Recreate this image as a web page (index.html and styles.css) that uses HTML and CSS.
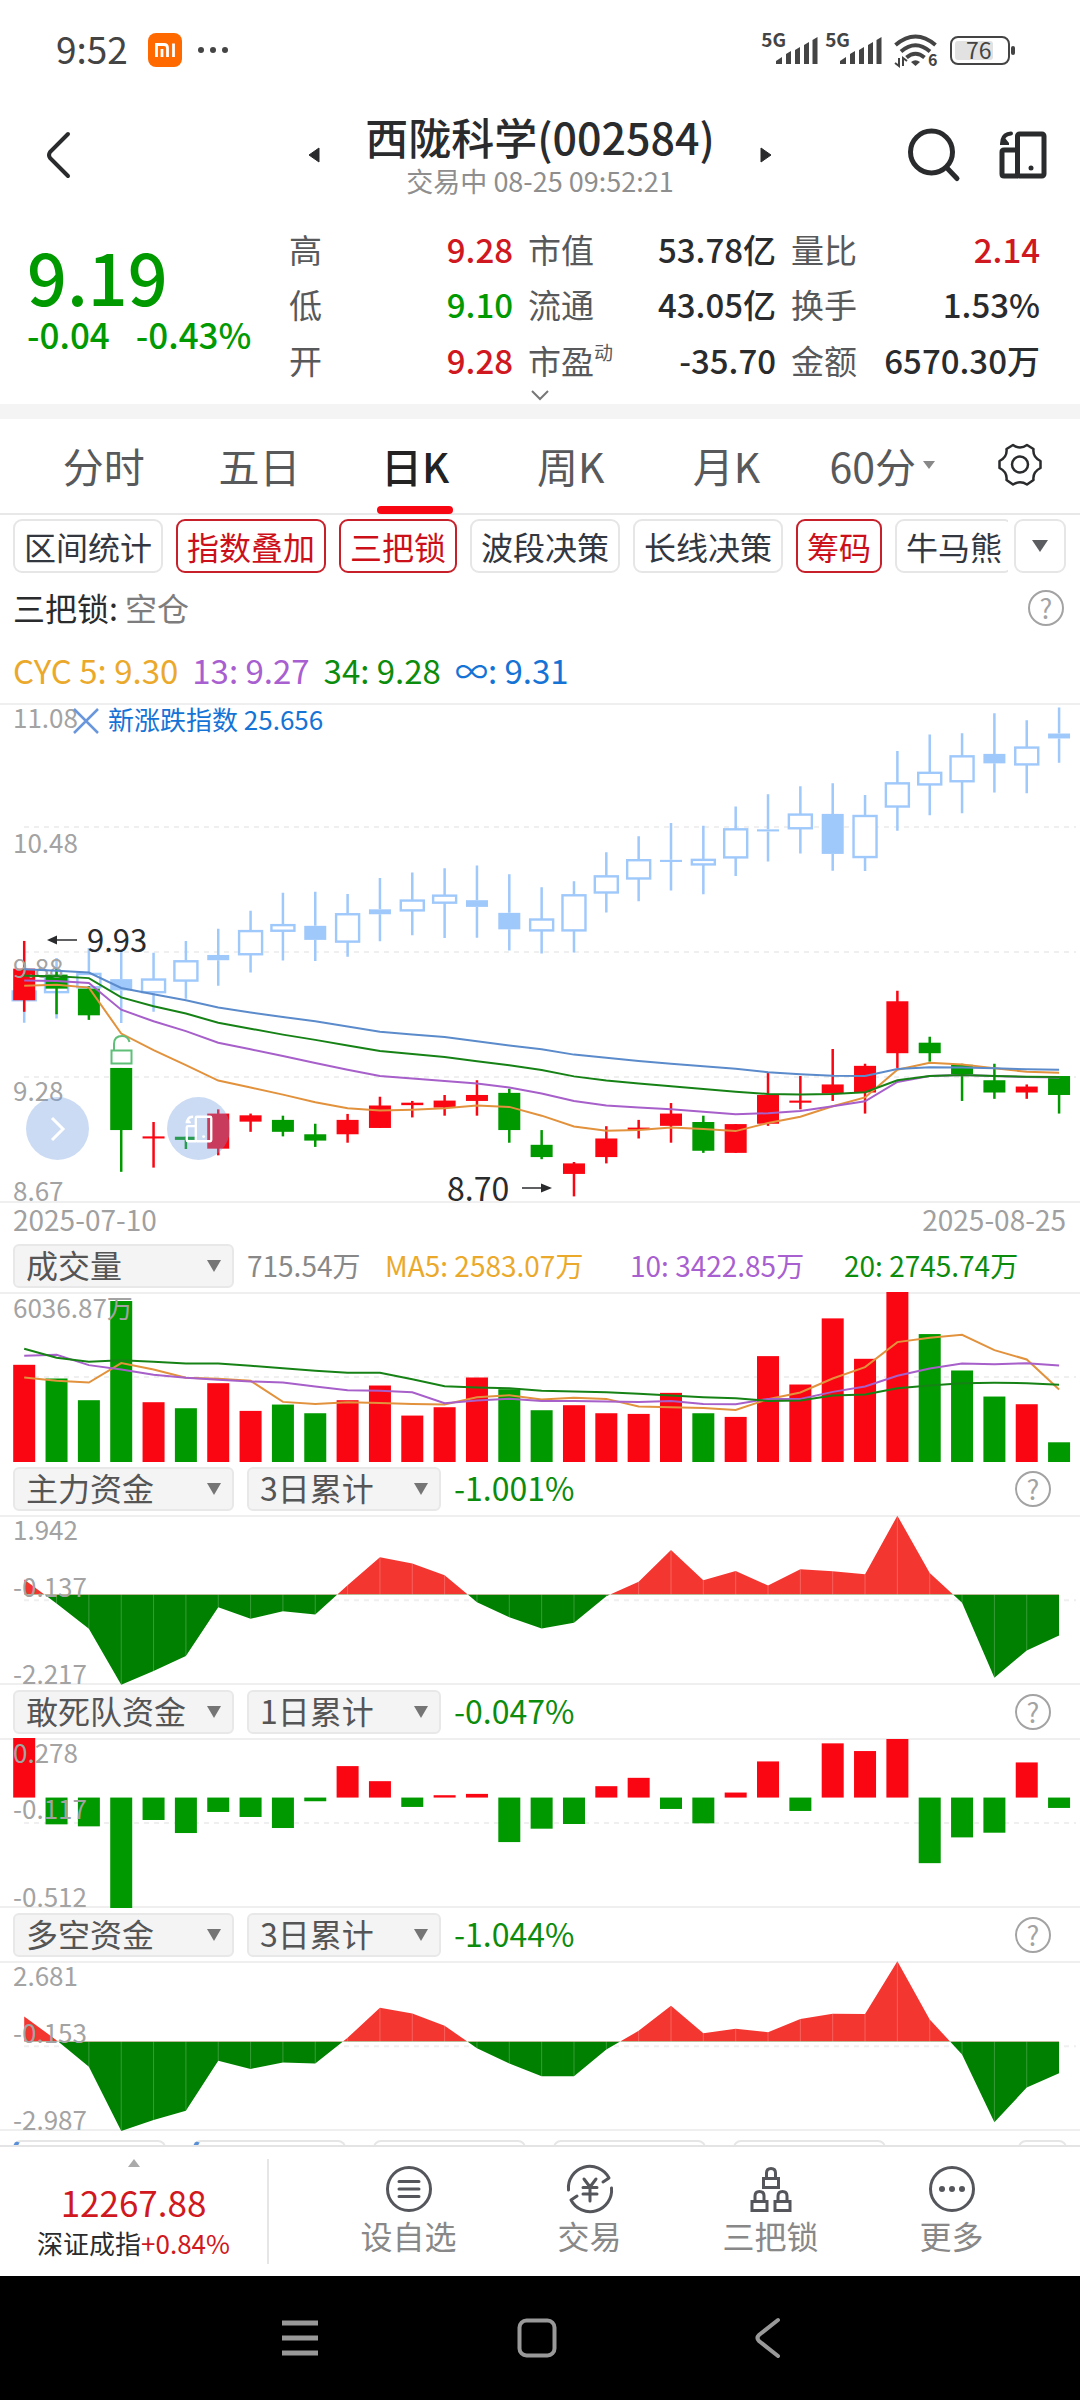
FILE: index.html
```html
<!DOCTYPE html>
<html lang="zh-CN">
<head>
<meta charset="utf-8">
<meta name="viewport" content="width=device-width, initial-scale=1">
<title>西陇科学(002584)</title>
<link rel="stylesheet" href="styles.css">
</head>
<body>
<div class="app">
  <div class="status">
    <span class="clock">9:52</span>
    <svg class="mi" viewBox="0 0 34 34" width="34" height="34"><rect width="34" height="34" rx="8" fill="#ff6900"/><path d="M8.500 24V11.500h7.500q3.500 0 3.500 3.500v9M14 16v8M25.500 10.500V24" fill="none" stroke="#fff" stroke-width="2.800"/></svg>
    <svg viewBox="0 0 32 8" width="32" height="8" fill="#444"><circle cx="4" cy="4" r="3"/><circle cx="16" cy="4" r="3"/><circle cx="28" cy="4" r="3"/></svg>
    <span class="spacer"></span>
    <span class="signal"><b>5G</b><svg viewBox="0 0 42 27" width="42" height="27" fill="#444"><path d="M0 27v-3l6-4v7zM10 27V17l5-3v13zM19 27V13l5-3v17zM28 27V8l5-3v22zM36.500 27V3l5-3v27z"/></svg></span>
    <span class="signal"><b>5G</b><svg viewBox="0 0 42 27" width="42" height="27" fill="#444"><path d="M0 27v-3l6-4v7zM10 27V17l5-3v13zM19 27V13l5-3v17zM28 27V8l5-3v22zM36.500 27V3l5-3v27z"/></svg></span>
    <svg class="wifi" viewBox="0 0 44 33" width="44" height="33" fill="none" stroke="#444" stroke-width="4"><path d="M1.500 11Q21.500-6 41.500 11M7 17.500q14.500-12.500 29 0M12.500 23.500q9-7.500 18 0"/><path d="M17 28q4.500-3.500 9 0l-4.500 4z" fill="#444" stroke="none"/><path d="M5 24v8l-4-3M9 32v-8l4 3" stroke-width="2"/><text x="34" y="32" font-size="16" font-weight="700" fill="#444" stroke="none">6</text></svg>
    <span class="battery"><span>76</span></span>
  </div>

  <header class="head">
    <button class="icon-btn back" aria-label="返回"><svg viewBox="0 0 26 46" width="26" height="46"><path d="M23 2 5 20q-2 3 0 6l18 18" fill="none" stroke="#2a2b2d" stroke-width="4" stroke-linecap="round"/></svg></button>
    <div class="title-group">
      <button class="icon-btn" aria-label="上一只"><svg viewBox="0 0 12 16" width="12" height="16"><path d="M11 1v14L1 8z" fill="#2a2b2d" stroke="#2a2b2d" stroke-linejoin="round"/></svg></button>
      <div class="title"><h1>西陇科学(002584)</h1><p>交易中 08-25 09:52:21</p></div>
      <button class="icon-btn" aria-label="下一只"><svg viewBox="0 0 12 16" width="12" height="16"><path d="M1 1v14l10-7z" fill="#2a2b2d" stroke="#2a2b2d" stroke-linejoin="round"/></svg></button>
    </div>
    <div class="head-tools">
      <button class="icon-btn" aria-label="搜索"><svg viewBox="0 0 54 54" width="54" height="54" fill="none" stroke="#2a2b2d" stroke-width="5"><circle cx="24.500" cy="24" r="21"/><path d="m40 40 10 10.500" stroke-linecap="round"/></svg></button>
      <button class="icon-btn" aria-label="横屏"><svg viewBox="0 0 48 48" width="48" height="48" fill="none" stroke="#2a2b2d" stroke-width="5"><rect x="18.500" y="3" width="26.500" height="42" rx="2"/><path d="M18.500 19H5q-2 0-2 2v22q0 2 2 2h14"/><circle cx="32" cy="37" r="2.500" fill="#2a2b2d" stroke="none"/><path d="M12 2.500Q5 3 3.500 9" stroke-linecap="round" stroke-width="4"/><path d="M1 13q0-6 5-6l4 5v2H1z" fill="#2a2b2d" stroke="none"/></svg></button>
    </div>
  </header>

  <main class="content">
    <section class="quote">
      <div class="price down"><strong>9.19</strong><span>-0.04</span><span>-0.43%</span></div>
      <dl class="stats">
        <div><dt>高</dt><dd class="up">9.28</dd></div>
        <div><dt>市值</dt><dd>53.78亿</dd></div>
        <div><dt>量比</dt><dd class="up">2.14</dd></div>
        <div><dt>低</dt><dd class="down">9.10</dd></div>
        <div><dt>流通</dt><dd>43.05亿</dd></div>
        <div><dt>换手</dt><dd>1.53%</dd></div>
        <div><dt>开</dt><dd class="up">9.28</dd></div>
        <div><dt>市盈<sup>动</sup></dt><dd>-35.70</dd></div>
        <div><dt>金额</dt><dd>6570.30万</dd></div>
      </dl>
      <button class="icon-btn more" aria-label="展开"><svg viewBox="0 0 18 10" width="18" height="10"><path d="m1 1 8 8 8-8" fill="none" stroke="#777" stroke-width="2"/></svg></button>
    </section>

    <nav class="tabs">
      <button>分时</button><button>五日</button><button class="active">日K</button><button>周K</button><button>月K</button><button>60分<i class="tri small"></i></button>
      <button class="gear" aria-label="设置"><svg viewBox="0 0 44 44" width="44" height="44" fill="none" stroke="#2a2b2d" stroke-width="2.500" stroke-linejoin="round"><path d="M15 2Q22 7 29 2L35.500 6Q34.500 14 42.500 18V25Q34.500 29 35.500 37L29 41.500Q22 37 15 41.500L8.500 37Q9.500 29 1.500 25V18Q9.500 14 8.500 6Z"/><circle cx="22" cy="21.500" r="8"/></svg></button>
    </nav>

    <div class="chips">
      <div class="chip-list">
        <button>区间统计</button><button class="on">指数叠加</button><button class="on">三把锁</button><button>波段决策</button><button>长线决策</button><button class="on">筹码</button><button>牛马熊</button>
      </div>
      <button class="chip-more" aria-label="更多指标"><i class="tri"></i></button>
    </div>

    <div class="lock-row">
      <p>三把锁: <span>空仓</span></p>
      <button class="help" aria-label="说明">?</button>
    </div>
    <p class="cyc"><span class="c-orange">CYC 5: 9.30</span><span class="c-purple">13: 9.27</span><span class="c-green">34: 9.28</span><span class="c-blue">∞: 9.31</span></p>

    <section class="kline">
      <svg id="kline" class="chart" viewBox="0 0 1080 500"></svg>
      <button class="float expand" aria-label="展开侧栏"><svg viewBox="0 0 16 26" width="16" height="26"><path d="m2 2 11 11L2 24" fill="none" stroke="#fff" stroke-width="3"/></svg></button>
      <button class="float rotate" aria-label="横屏"><svg viewBox="0 0 48 48" width="28" height="28" fill="none" stroke="#fff" stroke-width="4"><rect x="18.500" y="3" width="26.500" height="42" rx="2"/><path d="M18.500 19H5q-2 0-2 2v22q0 2 2 2h14"/><circle cx="32" cy="37" r="2.500" fill="#fff" stroke="none"/><path d="M14 3Q6 3 4.500 9"/><path d="M1 13q0-6 5-6l4 5v2H1z" fill="#fff" stroke="none"/></svg></button>
    </section>
    <div class="dates"><time>2025-07-10</time><time>2025-08-25</time></div>

    <section>
      <div class="panel-head">
        <label class="pick wide"><select aria-label="指标一"><option>成交量</option></select><i class="tri"></i></label>
        <p class="ma"><span class="c-gray">715.54万</span><span class="c-orange">MA5: 2583.07万</span><span class="c-purple">10: 3422.85万</span><span class="c-green">20: 2745.74万</span></p>
      </div>
      <svg id="volume" class="chart" viewBox="0 0 1080 170"></svg>
    </section>

    <section>
      <div class="panel-head">
        <label class="pick wide"><select aria-label="指标二"><option>主力资金</option></select><i class="tri"></i></label>
        <label class="pick"><select aria-label="指标二周期"><option>3日累计</option></select><i class="tri"></i></label>
        <span class="sum">-1.001%</span>
        <button class="help" aria-label="说明">?</button>
      </div>
      <svg id="main-fund" class="chart" viewBox="0 0 1080 170"></svg>
    </section>

    <section>
      <div class="panel-head">
        <label class="pick wide"><select aria-label="指标三"><option>敢死队资金</option></select><i class="tri"></i></label>
        <label class="pick"><select aria-label="指标三周期"><option>1日累计</option></select><i class="tri"></i></label>
        <span class="sum">-0.047%</span>
        <button class="help" aria-label="说明">?</button>
      </div>
      <svg id="hot-fund" class="chart" viewBox="0 0 1080 170"></svg>
    </section>

    <section>
      <div class="panel-head">
        <label class="pick wide"><select aria-label="指标四"><option>多空资金</option></select><i class="tri"></i></label>
        <label class="pick"><select aria-label="指标四周期"><option>3日累计</option></select><i class="tri"></i></label>
        <span class="sum">-1.044%</span>
        <button class="help" aria-label="说明">?</button>
      </div>
      <svg id="bull-bear" class="chart" viewBox="0 0 1080 170"></svg>
    </section>

    <div class="cards"><i class="mark"></i><i class="mark"></i><i></i><i></i><i></i><i class="last"></i></div>
  </main>

  <footer class="bottom">
    <a class="index" href="#index"><i class="tri up-tri"></i><strong>12267.88</strong><span>深证成指<em>+0.84%</em></span></a>
    <nav class="actions">
      <a href="#fav"><svg viewBox="0 0 48 48" width="48" height="48" fill="none" stroke="#54565c" stroke-width="3"><circle cx="24" cy="24" r="21.500"/><path d="M14 16.500h20M14 24h20M14 31.500h20" stroke-linecap="round"/></svg>设自选</a>
      <a href="#trade"><svg viewBox="0 0 48 48" width="48" height="48" fill="none" stroke="#54565c" stroke-width="3" stroke-linecap="round" stroke-linejoin="round"><path d="M2.500 25A21.500 21.500 0 0 1 43 13L37 17M45.500 23A21.500 21.500 0 0 1 5 35L11 31M18 14l6 8 6-8M24 22v14M17 22.500h14M17 29h14"/></svg>交易</a>
      <a href="#locks"><svg viewBox="0 0 48 48" width="48" height="48" fill="none" stroke="#54565c" stroke-width="3"><path d="M16.500 13.500h15v9h-15zM19.500 13V8q0-4.500 4.500-4.500T28.500 8v5M5 36.500h15v9H5zM8 36v-5q0-4.500 4.500-4.500T17 31v5M28 36.500h15v9H28zM31 36v-5q0-4.500 4.500-4.500T40 31v5"/></svg>三把锁</a>
      <a href="#more"><svg viewBox="0 0 48 48" width="48" height="48" fill="none" stroke="#54565c" stroke-width="3"><circle cx="24" cy="24" r="21.500"/><g fill="#54565c" stroke="none"><circle cx="14" cy="24" r="3"/><circle cx="24" cy="24" r="3"/><circle cx="34" cy="24" r="3"/></g></svg>更多</a>
    </nav>
  </footer>

  <div class="sysnav">
    <button class="icon-btn" aria-label="最近任务"><svg viewBox="0 0 38 38" width="38" height="38" stroke="#999" stroke-width="5"><path d="M1 4h36M1 19h36M1 34h36"/></svg></button>
    <button class="icon-btn" aria-label="主屏幕"><svg viewBox="0 0 40 40" width="40" height="40"><rect x="2.500" y="2.500" width="35" height="35" rx="7" fill="none" stroke="#999" stroke-width="4"/></svg></button>
    <button class="icon-btn" aria-label="返回"><svg viewBox="0 0 26 40" width="26" height="40"><path d="M23 2 4 17q-3 3 0 6l19 15" fill="none" stroke="#999" stroke-width="4" stroke-linecap="round"/></svg></button>
  </div>
</div>
<script src="charts.js"></script>
</body>
</html>
```
FILE: styles.css
```css
* { box-sizing: border-box; }
body { margin: 0; background: #fff; color: #2a2b2d; font-family: "Noto Sans CJK SC", "Noto Sans", sans-serif; }
h1, p, dl, dd { margin: 0; }
button { border: 0; padding: 0; background: none; color: inherit; font: inherit; cursor: pointer; }
a { color: inherit; text-decoration: none; }
svg { display: block; flex: none; overflow: visible; }
i, em { font-style: normal; }
.up { color: #d01820; }
.down { color: #090; }
.c-orange { color: #eba92b; }
.c-purple { color: #a85fd0; }
.c-green { color: #0c8c0c; }
.c-blue { color: #1673d6; }
.c-gray { color: #888; }

.app { display: flex; flex-direction: column; height: 100vh; }
.icon-btn { display: flex; align-items: center; justify-content: center; }
.spacer { flex: 1; }

.status { display: flex; align-items: center; height: 100px; padding: 0 70px 0 56px; flex: none; color: #444; }
.clock { font-size: 37px; line-height: 54px; padding-bottom: 4px; }
.mi { margin: 0 15px 0 20px; }
.signal { display: flex; align-items: flex-end; height: 28px; margin-right: 7px; }
.signal b { font-size: 19px; line-height: 20px; align-self: flex-start; margin: -7px -10px 0 0; }
.wifi { margin: 0 12px 0 5px; }
.battery { position: relative; width: 60px; height: 29px; padding: 3px; border: 2px solid #444; border-radius: 8px; }
.battery::after { content: ""; position: absolute; right: -7px; top: 8px; width: 4px; height: 9px; border-radius: 2px; background: #444; }
.battery span { display: block; width: 38px; height: 19px; padding-left: 11px; border-radius: 3px; background: #e2e2e2; font-size: 23px; line-height: 17px; }

.head { display: grid; grid-template-columns: 1fr auto 1fr; align-items: center; height: 110px; padding: 0 33px; flex: none; }
.back { justify-self: start; margin-left: 12px; }
.title-group { display: flex; align-items: center; gap: 45px; }
.title { text-align: center; }
.title h1 { font-size: 43px; line-height: 52px; font-weight: 500; }
.title p { font-size: 27px; line-height: 38px; color: #8e8e8e; }
.head-tools { display: flex; justify-self: end; gap: 38px; }

.content { flex: 1; min-height: 0; overflow: hidden auto; scrollbar-width: none; }
.quote { display: grid; grid-template-columns: 262px 1fr; padding: 14px 40px 0 27px; height: 194px; }
.price { padding-top: 16px; }
.price strong { display: block; font-size: 70px; line-height: 72px; font-weight: 500; }
.price span { font-size: 35px; line-height: 44px; font-weight: 500; margin-right: 26px; }
.price span:last-child { margin-right: 0; }
.stats { display: grid; grid-template-columns: 224fr 248fr 249fr; gap: 0 15px; }
.stats div { display: flex; justify-content: space-between; height: 54px; font-size: 33px; line-height: 50px; }
.stats dt { color: #58595b; }
.stats dd { font-weight: 500; }
.stats sup { font-size: 19px; line-height: 0; vertical-align: 14px; }
.more { grid-column: 1 / -1; justify-self: center; height: 10px; margin-left: 13px; }

.tabs { display: flex; height: 111px; padding-left: 26px; border-top: 15px solid #f4f4f4; border-bottom: 2px solid #e8e8e8; }
.tabs button { flex: 1; display: flex; align-items: center; justify-content: center; padding-bottom: 3px; font-size: 41px; color: #58595b; }
.tabs .active { position: relative; color: #222; font-weight: 500; }
.tabs .active::after { content: ""; position: absolute; left: 50%; bottom: -1px; width: 76px; height: 8px; margin-left: -38px; border-radius: 4px; background: #f80713; }
.tabs .gear { flex: none; width: 120px; }
.tri { flex: none; border: solid transparent; border-width: 12px 8px 0; border-top-color: #5b5d60; }
.tri.small { border-width: 8px 6px 0; margin-left: 7px; border-top-color: #888; }

.chips { display: flex; gap: 6px; padding: 4px 14px 0 13px; }
.chip-list { display: flex; gap: 13px; flex: 1; min-width: 0; overflow: hidden; }
.chips button { flex: none; height: 54px; padding: 0 9px; border: 2px solid #e6e6e6; border-radius: 9px; font-size: 32px; line-height: 46px; color: #33373f; white-space: nowrap; }
.chips .on { border-color: #c8202a; color: #cc101a; }
.chips .chip-more { display: flex; align-items: center; justify-content: center; width: 52px; }

.lock-row { display: flex; align-items: center; justify-content: space-between; height: 70px; padding: 0 16px 0 13px; font-size: 32px; }
.lock-row p { padding-bottom: 2px; }
.lock-row span { color: #7d7d7d; }
.help { width: 36px; height: 36px; border: 2px solid #a3a3a3; border-radius: 50%; color: #a3a3a3; font-size: 27px; line-height: 30px; }
.cyc { display: flex; gap: 14px; height: 60px; padding-left: 13px; font-size: 33px; line-height: 54px; }

.chart { width: 100%; height: auto; }
.kline { position: relative; }
.float { position: absolute; top: 394px; display: flex; align-items: center; justify-content: center; width: 63px; height: 63px; border-radius: 50%; background: rgba(110, 155, 225, .36); }
.expand { left: 26px; }
.rotate { left: 167px; }
.dates { display: flex; justify-content: space-between; height: 36px; padding: 0 14px 0 13px; font-size: 28px; line-height: 32px; color: #a0a0a0; }

.panel-head { display: flex; align-items: center; gap: 13px; height: 53px; padding: 0 29px 0 13px; }
.pick { display: flex; align-items: center; position: relative; width: 194px; height: 44px; border: 2px solid #e8e8e8; border-radius: 6px; background: #f4f4f4; }
.pick.wide { width: 221px; }
.pick select { width: 100%; height: 40px; padding: 0 0 3px 11px; border: 0; background: none; appearance: none; font: 32px/36px "Noto Sans CJK SC", sans-serif; color: #555; }
.pick .tri { position: absolute; right: 11px; border-width: 12px 7px 0; border-top-color: #757575; }
.ma { display: grid; grid-template-columns: 138px 245px 214px auto; font-size: 28px; line-height: 38px; padding-bottom: 2px; white-space: nowrap; }
.sum { flex: 1; font-size: 32px; line-height: 46px; color: #0c8c0c; padding-bottom: 4px; }

.cards { display: flex; gap: 27px; padding: 9px 13px 0; }
.cards i { width: 153px; height: 54px; border: 2px solid #e6e6e6; border-radius: 8px; }
.cards .mark { border-left: 5px solid #5b8fd6; }
.cards .last { width: 49px; margin-left: auto; }

.bottom { display: flex; align-items: center; flex: none; height: 131px; border-top: 2px solid #e4e4e4; background: #fff; }
.index { display: flex; flex-direction: column; align-items: center; width: 269px; height: 105px; border-right: 2px solid #e6e6e6; }
.up-tri { border-width: 0 6px 8px; border-bottom-color: #aaa; }
.index strong { margin-top: 13px; font-size: 35px; line-height: 44px; font-weight: 400; color: #d01820; }
.index span { font-size: 26px; line-height: 38px; }
.index em { color: #d01820; }
.actions { flex: 1; display: flex; padding: 0 38px 0 49px; }
.actions a { flex: 1; display: flex; flex-direction: column; align-items: center; padding-bottom: 2px; font-size: 32px; line-height: 44px; color: #888; }
.sysnav { display: flex; align-items: center; justify-content: center; gap: 198px; flex: none; height: 124px; padding-right: 18px; background: #000; }

.grid { stroke: #efefef; stroke-width: 2; }
.dash { stroke-dasharray: 5 5; }
.axis { font-size: 26px; fill: #a3a3a3; }
.line { fill: none; stroke-width: 2; }
```
FILE: charts.js
```javascript
const NS = 'http://www.w3.org/2000/svg';
const RED = '#fa0612', GREEN = '#090', SKY = '#9fc8fb';
const BAR = 22;
const x = i => 24.2 + i * 32.34;
const scale = (min, max, h) => v => (v - min) / (max - min) * h;

function add(svg, tag, attrs, text) {
  const el = document.createElementNS(NS, tag);
  for (const k in attrs) el.setAttribute(k, attrs[k]);
  if (text) el.textContent = text;
  svg.appendChild(el);
  return el;
}
function hline(svg, y, dashed) {
  add(svg, 'path', { class: dashed ? 'grid dash' : 'grid', d: dashed ? `M24 ${y}H1076` : `M0 ${y}H1080` });
}
function line(svg, values, y, color) {
  add(svg, 'polyline', { class: 'line', stroke: color, points: values.map((v, i) => x(i) + ',' + y(v)).join(' ') });
}
function label(svg, text, y) { add(svg, 'text', { class: 'axis', x: 13, y }, text); }
function rect(svg, i, y1, y2, color) {
  add(svg, 'rect', { x: x(i) - BAR / 2, y: y1, width: BAR, height: Math.max(y2 - y1, 2), fill: color });
}

/* ---- price candles with the overlaid index ---- */
(function () {
  const svg = document.getElementById('kline'), y = scale(38, 1460, 499);
  hline(svg, 1); [124, 249, 374].forEach(v => hline(svg, v, true)); hline(svg, 499);
  const index = [
    ['h',795,860,885,949],['h',765,820,862,937],['h',736,810,848,860],['s',747,825,857,950],['h',750,826,862,918],
    ['h',716,774,829,881],['s',681,756,771,844],['h',630,688,754,806],['h',579,671,687,772],['s',576,673,713,773],
    ['h',582,640,718,761],['s',537,626,640,717],['h',521,601,629,700],['h',509,587,607,708],['s',501,600,619,707],
    ['s',526,636,683,743],['h',563,655,686,752],['h',546,586,686,749],['h',463,532,578,635],['h',418,486,538,603],
    ['s',380,485,491,572],['h',388,485,498,583],['h',333,398,478,531],['s',298,398,404,490],['h',275,356,395,467],
    ['s',267,354,468,516],['h',300,360,477,517],['h',175,267,333,402],['h',128,237,270,358],['h',124,190,261,352],
    ['s',67,183,210,293],['h',87,165,213,295],['s',51,125,139,208]];
  index.forEach(([kind, hi, top, bot, lo], i) => {
    add(svg, 'path', { d: `M${x(i)} ${y(hi)}V${y(top)}M${x(i)} ${y(bot)}V${y(lo)}`, stroke: SKY, 'stroke-width': 2.5 });
    if (kind === 's') rect(svg, i, y(top), y(bot), SKY);
    else add(svg, 'rect', { x: x(i) - 11.5, y: y(top), width: 23, height: y(bot) - y(top), fill: '#fff', stroke: SKY, 'stroke-width': 2.4 });
  });
  const price = [
    ['r',716,795,885,918],['g',795,812,852,925],['g',845,852,928,941],['g',1078,1078,1255,1374],['r',1232,1273,1279,1362],
    ['g',1274,1274,1283,1309],['r',1196,1208,1308,1327],['r',1208,1213,1231,1260],['g',1214,1226,1260,1273],['g',1237,1267,1285,1303],
    ['r',1209,1226,1267,1291],['r',1160,1185,1249,1249],['r',1172,1177,1184,1219],['r',1155,1171,1191,1214],['r',1113,1155,1172,1214],
    ['g',1137,1149,1255,1291],['g',1255,1297,1332,1338],['r',1346,1350,1380,1444],['r',1244,1279,1332,1350],['r',1226,1248,1255,1279],
    ['r',1178,1208,1243,1291],['g',1214,1232,1314,1320],['r',1238,1238,1320,1320],['r',1092,1155,1237,1243],['r',1101,1171,1177,1196],
    ['r',1024,1125,1151,1172],['r',1066,1072,1148,1208],['r',858,888,1036,1078],['g',989,1006,1036,1060],['g',1066,1069,1096,1172],
    ['g',1066,1113,1148,1166],['r',1125,1131,1148,1166],['g',1101,1101,1155,1208]];
  price.forEach(([kind, hi, top, bot, lo], i) => {
    const c = kind === 'r' ? RED : GREEN;
    add(svg, 'path', { d: `M${x(i)} ${y(hi)}V${y(lo)}`, stroke: c, 'stroke-width': 2.5 });
    rect(svg, i, y(top), y(bot), c);
  });
  label(svg, '11.08', 25); label(svg, '10.48', 150); label(svg, '9.88', 275); label(svg, '9.28', 398); label(svg, '8.67', 498);
  line(svg, [844,841,849,980,1027,1070,1114,1134,1154,1176,1193,1199,1197,1193,1185,1189,1214,1245,1257,1255,1248,1252,1258,1235,1217,1187,1162,1083,1063,1068,1079,1089,1092], y, '#e2923c');
  line(svg, [829,830,836,912,945,973,1006,1025,1044,1064,1083,1101,1108,1115,1122,1134,1151,1172,1185,1191,1196,1203,1210,1207,1201,1187,1173,1118,1101,1098,1101,1104,1105], y, '#a75fca');
  line(svg, [815,817,822,877,902,923,949,966,983,998,1014,1030,1038,1047,1059,1070,1084,1102,1114,1122,1130,1138,1146,1152,1154,1152,1147,1113,1101,1098,1101,1103,1104], y, '#168216');
  line(svg, [797,801,806,850,868,885,906,920,933,945,960,975,983,990,1002,1014,1025,1040,1049,1058,1066,1073,1080,1090,1096,1100,1101,1081,1076,1077,1079,1082,1083], y, '#5b8bcb');
  add(svg, 'path', { d: 'M74 6l24 24M98 6L74 30', stroke: '#6a96dc', 'stroke-width': 2.5 });
  add(svg, 'text', { x: 108, y: 27, 'font-size': 26, fill: '#1673d6' }, '新涨跌指数 25.656');
  add(svg, 'path', { d: 'M77 237H50', stroke: '#2a2b2d', 'stroke-width': 1.5 });
  add(svg, 'path', { d: 'M47 237l10-4.500v9z', fill: '#2a2b2d' });
  add(svg, 'text', { x: 87, y: 249, 'font-size': 31, fill: '#2a2b2d' }, '9.93');
  add(svg, 'text', { x: 447, y: 498, 'font-size': 32, fill: '#2a2b2d' }, '8.70');
  add(svg, 'path', { d: 'M522 485h22', stroke: '#2a2b2d', 'stroke-width': 1.5 });
  add(svg, 'path', { d: 'M552 485l-11-4.500v9z', fill: '#2a2b2d' });
  add(svg, 'path', { d: 'M111.500 347.500h20v13h-20zM114 347v-6q0-8 8-8 6 0 7.500 6', fill: 'none', stroke: '#5fbf78', 'stroke-width': 2 });
})();

/* ---- volume ---- */
(function () {
  const svg = document.getElementById('volume'), y = scale(306, 815, 170);
  hline(svg, 1); hline(svg, 85, true);
  const bars = 'r524 g565 g630 g333 r636 g654 r579 r662 g643 g669 r630 r586 r676 r651 r562 g597 g660 r645 r669 r671 r608 g669 r680 r498 r583 r385 r506 r306 g432 g541 g619 r642 g756'.split(' ');
  bars.forEach((b, i) => rect(svg, i, y(+b.slice(1)), 170, b[0] === 'r' ? RED : GREEN));
  line(svg, [562,572,577,519,538,563,566,572,635,641,636,638,641,643,621,615,628,623,626,649,651,653,659,627,607,565,531,456,443,434,480,508,598], y, '#e2923c');
  line(svg, [497,494,525,538,554,563,569,574,577,589,600,602,606,639,631,626,632,632,634,635,632,641,642,626,626,605,589,557,535,520,522,519,526], y, '#a75fca');
  line(svg, [476,503,515,510,515,520,520,527,534,542,548,548,567,588,592,594,602,604,606,611,616,621,624,632,631,616,613,594,586,579,578,579,584], y, '#168216');
  label(svg, '6036.87万', 26);
})();

/* ---- signed area charts ---- */
function area(id, min, max, zero, mid, values, labels) {
  const svg = document.getElementById(id), y = scale(min, max, 170), z = y(zero);
  hline(svg, 1); hline(svg, y(mid), true); hline(svg, 169);
  [['up', 0, z, '#f43630'], ['dn', z, 170 - z, '#008000']].forEach(([k, top, h, color]) => {
    const clip = add(svg, 'clipPath', { id: id + k });
    add(clip, 'rect', { x: 0, y: top, width: 1080, height: h });
    add(svg, 'polygon', { 'clip-path': `url(#${id + k})`, fill: color,
      points: `${x(0)},${z} ` + values.map((v, i) => x(i) + ',' + y(v)).join(' ') + ` ${x(32)},${z}` });
  });
  values.forEach((v, i) => { if (i && i < 32) add(svg, 'path', { d: `M${x(i)} ${z}V${y(v)}`, stroke: '#fff', 'stroke-opacity': .22, 'stroke-width': 1 }); });
  labels.forEach((t, i) => label(svg, t, [25, 82, 169][i]));
}
area('main-fund', 974, 1485, 1213, 1230, [1168,1240,1316,1484,1443,1398,1251,1286,1263,1273,1185,1101,1120,1155,1236,1281,1315,1298,1218,1175,1079,1170,1142,1186,1137,1143,1152,976,1148,1238,1463,1381,1336], ['1.942', '-0.137', '-2.217']);
area('bull-bear', 843, 1352, 1084, 1098, [1009,1080,1160,1352,1319,1291,1142,1166,1147,1150,1073,983,1000,1037,1104,1150,1188,1188,1108,1052,977,1059,1046,1056,1017,1001,1002,844,1018,1123,1326,1222,1179], ['2.681', '-0.153', '-2.987']);

/* ---- signed bars ---- */
(function () {
  const svg = document.getElementById('hot-fund'), y = scale(174, 682, 170), z = 352;
  hline(svg, 1); hline(svg, y(428), true); hline(svg, 169);
  [174,432,438,682,419,458,395,410,443,363,258,303,380,345,341,485,445,431,318,293,386,429,337,244,392,190,213,177,548,471,457,247,383]
    .forEach((v, i) => v < z ? rect(svg, i, y(v), y(z), RED) : rect(svg, i, y(z), y(v), GREEN));
  label(svg, '0.278', 25); label(svg, '-0.117', 81); label(svg, '-0.512', 169);
})();
```
